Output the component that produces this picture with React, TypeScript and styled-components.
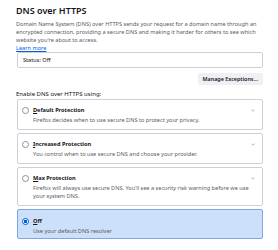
import React from "react";
import styled, { createGlobalStyle } from "styled-components";

const Global = createGlobalStyle`
  html, body { margin: 0; padding: 0; background: #ffffff; }
  body { font-family: "Noto Sans", "Open Sans", sans-serif; color: #15141a; }
`;

const Page = styled.div`
  width: 247px;
  padding: 5px 15px 0 16px;
  display: flex;
  flex-direction: column;
`;

const Heading = styled.h1`
  margin: 0 0 3px 0;
  font-size: 9px;
  line-height: 12px;
  font-weight: 600;
`;

const Desc = styled.p`
  margin: 0;
  font-size: 5.6px;
  line-height: 8px;
  color: #5b5b66;
`;

const Link = styled.a`
  font-size: 5.6px;
  line-height: 8px;
  color: #0061e0;
  text-decoration: underline;
  align-self: flex-start;
`;

const StatusBox = styled.div`
  margin-left: 1px;
  height: 14px;
  border: 1px solid #cfcfd8;
  border-radius: 2px;
  display: flex;
  align-items: center;
  padding: 0 5px;
  font-size: 5.6px;
  color: #15141a;
`;

const ButtonRow = styled.div`
  display: flex;
  justify-content: flex-end;
  margin-top: 5px;
`;

const Button = styled.button`
  height: 12px;
  padding: 0 5px;
  border: none;
  border-radius: 2px;
  background: #f0f0f4;
  font-family: inherit;
  font-size: 5.4px;
  font-weight: 600;
  color: #15141a;
`;

const SectionLabel = styled.div`
  margin-top: 5px;
  font-size: 6px;
  line-height: 9px;
  color: #15141a;
`;

const Options = styled.div`
  margin-top: 0;
  margin-left: 1px;
  display: flex;
  flex-direction: column;
  gap: 3px;
`;

const Card = styled.div<{ $selected?: boolean }>`
  position: relative;
  border: 1px solid ${(p) => (p.$selected ? "#7ea6e0" : "#cfcfd8")};
  background: ${(p) => (p.$selected ? "#cde0f9" : "#ffffff")};
  border-radius: 2px;
  padding: ${(p) => (p.$selected ? "6px 6px 3px 4px" : "5px 6px 5px 4px")};
`;

const TitleRow = styled.div`
  display: flex;
  align-items: center;
  gap: 4px;
  height: 10px;
`;

const Radio = styled.span<{ $checked?: boolean }>`
  width: 5px;
  height: 5px;
  border-radius: 50%;
  flex: none;
  border: 0.8px solid ${(p) => (p.$checked ? "#0061e0" : "#8f8f9d")};
  background: ${(p) =>
    p.$checked ? "radial-gradient(circle, #0061e0 0 1.6px, #ffffff 1.9px)" : "#ffffff"};
`;

const Title = styled.span`
  font-size: 5.6px;
  font-weight: 700;
  color: #15141a;
  u { text-decoration: underline; }
`;

const OptDesc = styled.div`
  margin-left: 11px;
  margin-top: 1px;
  font-size: 5.6px;
  line-height: 8px;
  color: #5b5b66;
`;

const Chevron = styled.svg`
  position: absolute;
  right: 7px;
  top: 9px;
  width: 4px;
  height: 3px;
`;

type Opt = { key: string; rest: string; desc: string; selected?: boolean; chevron?: boolean };

const options: Opt[] = [
  { key: "D", rest: "efault Protection", desc: "Firefox decides when to use secure DNS to protect your privacy.", chevron: true },
  { key: "I", rest: "ncreased Protection", desc: "You control when to use secure DNS and choose your provider.", chevron: true },
  {
    key: "M",
    rest: "ax Protection",
    desc: "Firefox will always use secure DNS. You\u2019ll see a security risk warning before we use your system DNS.",
    chevron: true,
  },
  { key: "O", rest: "ff", desc: "Use your default DNS resolver", selected: true },
];

export default function App() {
  return (
    <>
      <Global />
      <Page>
        <Heading>DNS over HTTPS</Heading>
        <Desc>
          Domain Name System (DNS) over HTTPS sends your request for a domain name through an encrypted
          connection, providing a secure DNS and making it harder for others to see which website you're
          about to access.
        </Desc>
        <Link href="#">Learn more</Link>
        <StatusBox>Status: Off</StatusBox>
        <ButtonRow>
          <Button>Manage Exceptions…</Button>
        </ButtonRow>
        <SectionLabel>Enable DNS over HTTPS using:</SectionLabel>
        <Options>
          {options.map((o) => (
            <Card key={o.key} $selected={o.selected}>
              <TitleRow>
                <Radio $checked={o.selected} />
                <Title>
                  <u>{o.key}</u>
                  {o.rest}
                </Title>
              </TitleRow>
              <OptDesc>{o.desc}</OptDesc>
              {o.chevron && (
                <Chevron viewBox="0 0 4 3">
                  <path d="M0.5 0.8 L2 2.2 L3.5 0.8" fill="none" stroke="#8f8f9d" strokeWidth="0.7" />
                </Chevron>
              )}
            </Card>
          ))}
        </Options>
      </Page>
    </>
  );
}
